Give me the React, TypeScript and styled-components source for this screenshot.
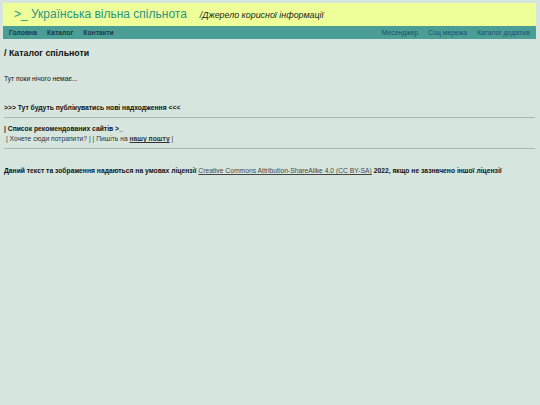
import styled, { createGlobalStyle } from "styled-components";

const Global = createGlobalStyle`
  html, body {
    margin: 0;
    padding: 0;
    background: #d6e6df;
  }
  body {
    font-family: "Liberation Sans", Arial, sans-serif;
    color: #111;
  }
`;

const Page = styled.div`
  padding: 3px 4px 0 3px;
`;

const Header = styled.header`
  display: flex;
  align-items: baseline;
  gap: 13px;
  height: 23px;
  padding: 0 11px;
  background: #eeff99;
  box-sizing: border-box;
  line-height: 23px;
`;

const Title = styled.span`
  font-size: 12px;
  color: #2a9487;
`;

const Subtitle = styled.span`
  font-size: 8.9px;
  font-style: italic;
  color: #222;
`;

const Nav = styled.nav`
  display: flex;
  justify-content: space-between;
  align-items: center;
  height: 13px;
  padding: 0 6px;
  background: #4a9e96;
`;

const NavGroup = styled.div`
  display: flex;
  gap: 10px;
`;

const NavLink = styled.a<{ $bold?: boolean }>`
  font-size: 6.8px;
  font-weight: ${(p) => (p.$bold ? 700 : 400)};
  color: ${(p) => (p.$bold ? "#1c3a48" : "#21506a")};
  text-decoration: none;
`;

const Content = styled.main`
  padding: 0 1px;
`;

const Heading = styled.h1`
  margin: 8px 0 0;
  font-size: 8.8px;
  font-weight: 700;
  line-height: 12px;
`;

const Text = styled.p<{ $bold?: boolean; $top?: number }>`
  margin: ${(p) => p.$top ?? 0}px 0 0;
  font-size: 6.75px;
  line-height: 10px;
  font-weight: ${(p) => (p.$bold ? 700 : 400)};
`;

const Soft = styled.span`
  font-weight: 400;
  color: #333;
`;

const Rule = styled.hr<{ $top: number }>`
  margin: ${(p) => p.$top}px 0 0;
  border: 0;
  border-top: 1px solid #a9b5b1;
`;

const Link = styled.a`
  color: #444;
  text-decoration: underline;
`;

const BoldLink = styled.a`
  color: #333;
  font-weight: 700;
  text-decoration: underline;
`;

export default function App() {
  return (
    <>
      <Global />
      <Page>
        <Header>
          <Title>&gt;_ Українська вільна спільнота</Title>
          <Subtitle>/Джерело корисної інформації</Subtitle>
        </Header>
        <Nav>
          <NavGroup>
            <NavLink $bold>Головна</NavLink>
            <NavLink $bold>Каталог</NavLink>
            <NavLink $bold>Контакти</NavLink>
          </NavGroup>
          <NavGroup>
            <NavLink>Месенджер</NavLink>
            <NavLink>Соц мережа</NavLink>
            <NavLink>Каталог додатків</NavLink>
          </NavGroup>
        </Nav>
        <Content>
          <Heading>/ Каталог спільноти</Heading>
          <Text $top={15}>Тут поки нічого немає...</Text>
          <Text $bold $top={19}>&gt;&gt;&gt; Тут будуть публікуватись нові надходження &lt;&lt;&lt;</Text>
          <Rule $top={4} />
          <Text $bold $top={6}>| Список рекомендованих сайтів &gt;_</Text>
          <Text>
            <Soft>&nbsp;| Хочете сюди потрапити? | | Пишіть на </Soft>
            <BoldLink>нашу пошту</BoldLink>
            <Soft> |</Soft>
          </Text>
          <Rule $top={4} />
          <Text $bold $top={17}>
            Даний текст та зображення надаються на умовах ліцензії{" "}
            <Soft>
              <Link>Creative Commons Attribution-ShareAlike 4.0 (CC BY-SA)</Link>
            </Soft>{" "}
            2022, якщо не зазначено іншої ліцензії
          </Text>
        </Content>
      </Page>
    </>
  );
}
